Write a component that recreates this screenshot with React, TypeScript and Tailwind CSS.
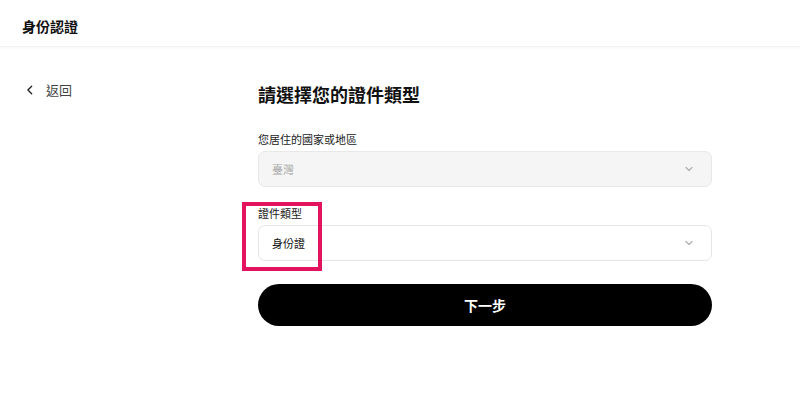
import React from 'react';

const font = { fontFamily: '"Noto Sans CJK TC", "Noto Sans", sans-serif' };

const Chevron: React.FC<{ className?: string }> = ({ className }) => (
  <svg viewBox="0 0 12 12" className={className} fill="none" stroke="currentColor" strokeWidth="1.2">
    <path d="M3 4.5 L6 7.5 L9 4.5" strokeLinecap="round" strokeLinejoin="round" />
  </svg>
);

const SelectField: React.FC<{ label: string; value: string; disabled?: boolean }> = ({ label, value, disabled }) => (
  <div className="flex flex-col">
    <label className="text-[11px] leading-[14px] text-[#222]">{label}</label>
    <div
      className={`mt-[5px] h-[36px] flex items-center justify-between pl-[13px] pr-[16px] rounded-[7px] border ${
        disabled ? 'bg-[#f5f5f5] border-[#e8e8e8]' : 'bg-white border-[#e6e6e6]'
      }`}
    >
      <span className={`text-[11px] ${disabled ? 'text-[#a8a8a8]' : 'text-[#111]'}`}>{value}</span>
      <Chevron className="w-[12px] h-[12px] text-[#b0b0b0]" />
    </div>
  </div>
);

export default function App() {
  return (
    <div className="w-[800px] h-[417px] bg-white overflow-hidden" style={font}>
      <header className="h-[47px] flex items-center px-[22px] shadow-[0_1px_2px_rgba(0,0,0,0.04)] border-b border-[#f3f3f3]">
        <h1 className="text-[14px] font-bold text-[#111] pt-[6px]">身份認證</h1>
      </header>

      <div className="flex">
        <div className="w-[258px] pl-[25px] pt-[33px]">
          <button className="flex items-center gap-[11px] text-[#444]">
            <svg viewBox="0 0 12 12" className="w-[10px] h-[12px]" fill="none" stroke="#222" strokeWidth="1.6">
              <path d="M8 1.5 L3.5 6 L8 10.5" strokeLinecap="round" strokeLinejoin="round" />
            </svg>
            <span className="text-[13px]">返回</span>
          </button>
        </div>

        <main className="w-[454px] pt-[35px]">
          <h2 className="text-[18px] leading-[24px] font-bold text-[#111]">請選擇您的證件類型</h2>

          <div className="mt-[26px]">
            <SelectField label="您居住的國家或地區" value="臺灣" disabled />
          </div>

          <div className="mt-[19px] relative">
            <SelectField label="證件類型" value="身份證" />
            <div className="absolute left-[-16px] top-[-4px] w-[80px] h-[69px] border-[4px] border-[#e3135e] pointer-events-none" />
          </div>

          <button className="mt-[23px] w-full h-[42px] rounded-full bg-black text-white text-[14px] font-bold">
            下一步
          </button>
        </main>
      </div>
    </div>
  );
}
